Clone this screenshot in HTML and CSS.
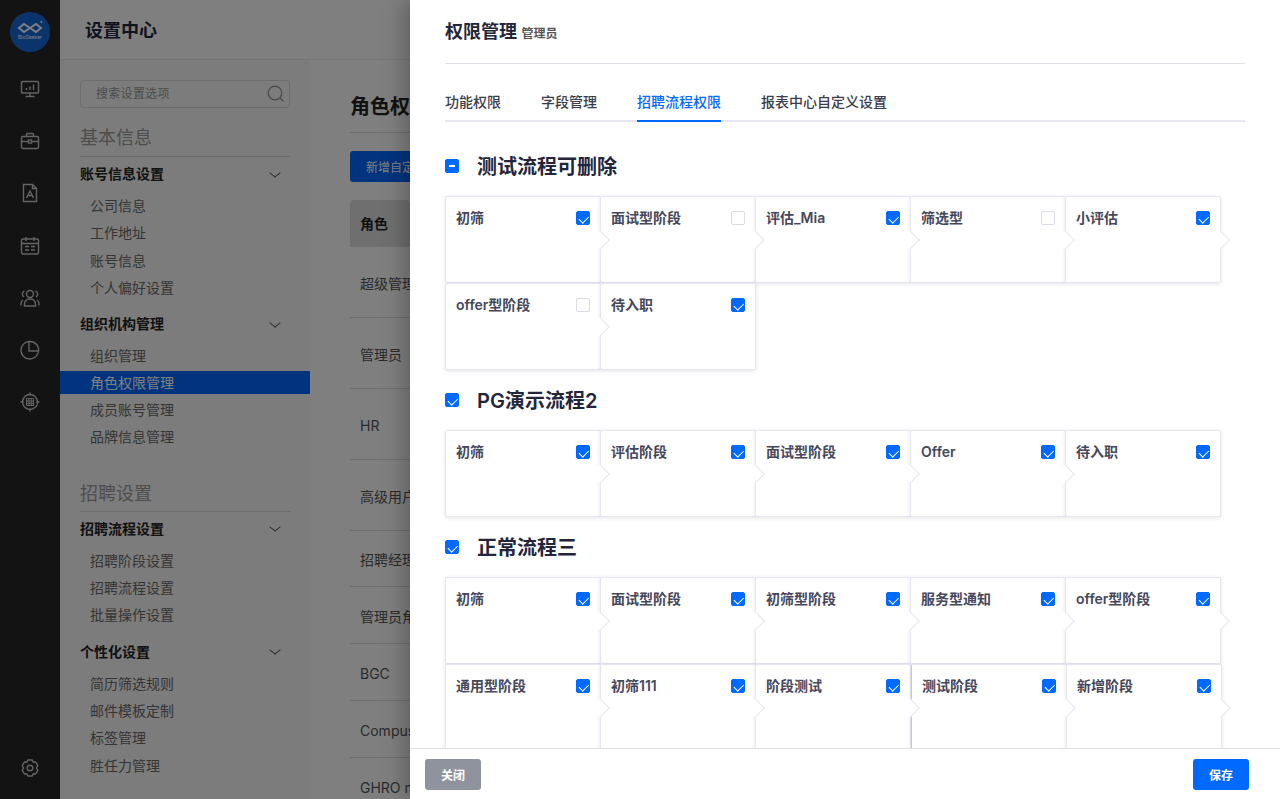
FILE: index.html
```html
<!DOCTYPE html>
<html lang="zh-CN">
<head>
    <meta charset="UTF-8">
    <title>设置中心</title>
    <link rel="stylesheet" href="styles.css">
</head>
<body>
    <div class="app">
        <nav class="rail">
            <div class="logo">
                <svg width="26" height="14" viewBox="0 0 26 14" fill="none" stroke="#fff" stroke-width="2">
                    <path d="M2 8 L7 4 L13 8 L7 12 Z"/>
                    <path d="M13 8 L19 4 L24 8 L19 12 Z"/>
                    <circle cx="24.500" cy="2" r="0.700" stroke-width="1"/>
                </svg>
                <span class="logo-text">BioSeeker</span>
            </div>
            <a class="rail-icon first">
                <svg width="20" height="20" viewBox="0 0 20 20" fill="none" stroke="currentColor" stroke-width="1.4">
                    <rect x="1.5" y="2.5" width="17" height="11.5" rx="1"/>
                    <path d="M10 14v3M5.5 17.5h9M6.5 11V9M10 11V7.5M13.5 11V5.5"/>
                </svg>
            </a>
            <a class="rail-icon">
                <svg width="20" height="20" viewBox="0 0 20 20" fill="none" stroke="currentColor" stroke-width="1.4">
                    <rect x="1.5" y="5.5" width="17" height="12" rx="1.5"/>
                    <path d="M6.5 5.5V3.5a1 1 0 0 1 1-1h5a1 1 0 0 1 1 1v2M1.5 10.5h7M11.5 10.5h7"/>
                    <rect x="8.5" y="9" width="3" height="3"/>
                </svg>
            </a>
            <a class="rail-icon">
                <svg width="20" height="20" viewBox="0 0 20 20" fill="none" stroke="currentColor" stroke-width="1.4">
                    <path d="M3.5 1.5h9l4 4v13h-13z"/>
                    <path d="M12.5 1.5v4h4M6.5 15l3.5-7 3.5 7M8 12.5h4"/>
                </svg>
            </a>
            <a class="rail-icon">
                <svg width="20" height="20" viewBox="0 0 20 20" fill="none" stroke="currentColor" stroke-width="1.4">
                    <rect x="1.5" y="3" width="17" height="15" rx="1.5"/>
                    <path d="M1.5 7.5h17M6 1v4M14 1v4M5 10.5h4M11 10.5h4M5 14h4M11 14h4"/>
                </svg>
            </a>
            <a class="rail-icon">
                <svg width="20" height="20" viewBox="0 0 20 20" fill="none" stroke="currentColor" stroke-width="1.4">
                    <circle cx="10" cy="6" r="3.5"/>
                    <path d="M4.5 18v-2a5 5 0 0 1 5-5h1a5 5 0 0 1 5 5v2zM4.500 2.800A3.500 3.500 0 0 0 4 9M15.500 2.800A3.500 3.500 0 0 1 16 9M1 17.500v-2a4 4 0 0 1 2-3.500M19 17.500v-2a4 4 0 0 0-2-3.500"/>
                </svg>
            </a>
            <a class="rail-icon">
                <svg width="20" height="20" viewBox="0 0 20 20" fill="none" stroke="currentColor" stroke-width="1.4">
                    <path d="M9 1.500v9.500h9.500A8.800 8.800 0 1 1 9 1.500z"/>
                    <path d="M9 1.500h1a8.500 8.500 0 0 1 8.500 9.500"/>
                </svg>
            </a>
            <a class="rail-icon">
                <svg width="20" height="20" viewBox="0 0 20 20" fill="none" stroke="currentColor" stroke-width="1.4">
                    <circle cx="10" cy="10" r="7.500"/>
                    <path d="M10 0.500v3M10 16.500v3M0.500 10h3M16.500 10h3"/>
                    <path d="M6.500 6.500h7v7h-7zM6.500 9h7M6.500 11.300h7M8.800 6.500v7M11.200 6.500v7" stroke-width="1"/>
                </svg>
            </a>
            <a class="rail-icon settings">
                <svg width="20" height="20" viewBox="0 0 20 20" fill="none" stroke="currentColor" stroke-width="1.4" stroke-linejoin="round">
                    <path d="M7.800 2h4.400l1 2.200 2.400-.2 2.200 3.600-1.400 2.400 1.400 2.400-2.200 3.600-2.400-.2-1 2.200H7.800l-1-2.200-2.400.2-2.200-3.600L3.600 10 2.200 7.600 4.400 4l2.400.2z"/>
                    <circle cx="10" cy="10" r="2.800"/>
                </svg>
            </a>
        </nav>

        <div class="page">
            <header class="page-header">设置中心</header>
            <div class="page-body">
                <aside class="side">
                    <div class="search">
                        <span class="search-text">搜索设置选项</span>
                        <svg width="18" height="18" viewBox="0 0 18 18" fill="none" stroke="#8f8f8f" stroke-width="1.2">
                            <circle cx="8" cy="8" r="6.8"/>
                            <path d="M13 13l3.500 3.500"/>
                        </svg>
                    </div>

                    <h3 class="side-title">基本信息</h3>
                    <div class="group-title">账号信息设置<i class="chev"></i></div>
                    <a class="side-item">公司信息</a>
                    <a class="side-item">工作地址</a>
                    <a class="side-item">账号信息</a>
                    <a class="side-item">个人偏好设置</a>

                    <div class="group-title next">组织机构管理<i class="chev"></i></div>
                    <a class="side-item">组织管理</a>
                    <a class="side-item active">角色权限管理</a>
                    <a class="side-item">成员账号管理</a>
                    <a class="side-item">品牌信息管理</a>

                    <h3 class="side-title second">招聘设置</h3>
                    <div class="group-title">招聘流程设置<i class="chev"></i></div>
                    <a class="side-item">招聘阶段设置</a>
                    <a class="side-item">招聘流程设置</a>
                    <a class="side-item">批量操作设置</a>

                    <div class="group-title next">个性化设置<i class="chev"></i></div>
                    <a class="side-item">简历筛选规则</a>
                    <a class="side-item">邮件模板定制</a>
                    <a class="side-item">标签管理</a>
                    <a class="side-item">胜任力管理</a>
                </aside>

                <main class="roles">
                    <h2 class="roles-title">角色权限管理</h2>
                    <button class="add-btn">新增自定义角色</button>
                    <div class="table-head">角色</div>
                    <div class="row">超级管理员</div>
                    <div class="row">管理员</div>
                    <div class="row">HR</div>
                    <div class="row">高级用户</div>
                    <div class="row short first-short">招聘经理</div>
                    <div class="row short">管理员角色</div>
                    <div class="row short">BGC</div>
                    <div class="row short">Compus</div>
                    <div class="row short">GHRO manager</div>
                </main>
            </div>
        </div>

        <div class="mask"></div>

        <section class="drawer">
            <div class="drawer-body">
                <div class="drawer-head">
                    <span class="drawer-title">权限管理</span>
                    <span class="drawer-sub">管理员</span>
                </div>
                <div class="tabs">
                    <a class="tab">功能权限</a>
                    <a class="tab">字段管理</a>
                    <a class="tab active">招聘流程权限</a>
                    <a class="tab">报表中心自定义设置</a>
                </div>

                <div class="flow-head">
                    <span class="check partial"></span>
                    <span class="flow-name">测试流程可删除</span>
                </div>
                <div class="stages">
                    <div class="stage">初筛<span class="check on"></span></div>
                    <div class="stage">面试型阶段<span class="check"></span></div>
                    <div class="stage">评估_Mia<span class="check on"></span></div>
                    <div class="stage">筛选型<span class="check"></span></div>
                    <div class="stage">小评估<span class="check on"></span></div>
                    <div class="stage">offer型阶段<span class="check"></span></div>
                    <div class="stage no-arrow">待入职<span class="check on"></span></div>
                </div>

                <div class="flow-head">
                    <span class="check on"></span>
                    <span class="flow-name">PG演示流程2</span>
                </div>
                <div class="stages">
                    <div class="stage">初筛<span class="check on"></span></div>
                    <div class="stage">评估阶段<span class="check on"></span></div>
                    <div class="stage">面试型阶段<span class="check on"></span></div>
                    <div class="stage">Offer<span class="check on"></span></div>
                    <div class="stage no-arrow">待入职<span class="check on"></span></div>
                </div>

                <div class="flow-head">
                    <span class="check on"></span>
                    <span class="flow-name">正常流程三</span>
                </div>
                <div class="stages">
                    <div class="stage">初筛<span class="check on"></span></div>
                    <div class="stage">面试型阶段<span class="check on"></span></div>
                    <div class="stage">初筛型阶段<span class="check on"></span></div>
                    <div class="stage">服务型通知<span class="check on"></span></div>
                    <div class="stage">offer型阶段<span class="check on"></span></div>
                    <div class="stage">通用型阶段<span class="check on"></span></div>
                    <div class="stage">初筛111<span class="check on"></span></div>
                    <div class="stage">阶段测试<span class="check on"></span></div>
                    <div class="stage shifted">测试阶段<span class="check on"></span></div>
                    <div class="stage">新增阶段<span class="check on"></span></div>
                </div>
            </div>
            <footer class="drawer-foot">
                <button class="foot-btn close">关闭</button>
                <button class="foot-btn save">保存</button>
            </footer>
        </section>
    </div>
</body>
</html>
```

FILE: styles.css
```css
* {
    margin: 0;
    padding: 0;
    box-sizing: border-box;
}

body {
    font-family: "Inter", "Noto Sans CJK SC", sans-serif;
    background: #fff;
    color: #23263b;
    overflow: hidden;
}

.app {
    display: flex;
    height: 799px;
    overflow: hidden;
    position: relative;
}

/* left icon rail */
.rail {
    width: 60px;
    flex: none;
    background: #262626;
    color: #c8c8c8;
    display: flex;
    flex-direction: column;
    align-items: center;
    padding-top: 12px;
}

.logo {
    width: 40px;
    height: 40px;
    border-radius: 50%;
    background: #1669d8;
    display: flex;
    flex-direction: column;
    align-items: center;
    padding-top: 8px;
}

.logo-text {
    color: #fff;
    font-size: 5px;
    line-height: 7px;
    white-space: nowrap;
}

.rail-icon {
    width: 20px;
    height: 20px;
    margin-bottom: 32.2px;
    display: block;
}

.rail-icon.first {
    margin-top: 27px;
}

.rail-icon.settings {
    margin-top: auto;
    margin-bottom: 21px;
}

/* settings page under the mask */
.page {
    flex: 1;
    display: flex;
    flex-direction: column;
    min-width: 0;
}

.page-header {
    height: 60px;
    flex: none;
    padding-left: 25px;
    font-size: 18px;
    font-weight: 600;
    line-height: 61px;
    border-bottom: 1px solid #e8e8e8;
}

.page-body {
    flex: 1;
    display: flex;
    min-height: 0;
}

.side {
    width: 250px;
    flex: none;
    background: #f8f8f8;
    padding-top: 20px;
}

.search {
    margin: 0 20px;
    height: 28px;
    border: 1px solid #d8d8d8;
    border-radius: 4px;
    display: flex;
    align-items: center;
    justify-content: space-between;
    padding: 0 4px 0 15px;
    font-size: 12px;
    color: #9a9a9a;
    letter-spacing: 0.3px;
}

.search-text {
    margin-top: -3px;
}

.side-title {
    margin: 14px 20px 0;
    height: 35px;
    border-bottom: 1px solid #d8d8d8;
    font-size: 18px;
    line-height: 32px;
    font-weight: 400;
    color: #9a9a9a;
}

.side-title.second {
    margin-top: 26px;
    line-height: 34px;
}

.group-title {
    margin: 6px 20px 7px;
    height: 22px;
    line-height: 22px;
    font-size: 14px;
    font-weight: 600;
    color: #222;
    display: flex;
    justify-content: space-between;
    align-items: center;
}

.group-title.next {
    margin-top: 12px;
}

.chev {
    width: 8px;
    height: 8px;
    border-right: 1px solid #444;
    border-bottom: 1px solid #444;
    transform: scaleY(0.8) rotate(45deg);
    margin: -3px 11px 0 0;
}

.side-item {
    display: block;
    height: 27.3px;
    line-height: 27px;
    padding-left: 30px;
    font-size: 14px;
    color: #6a6a6a;
}

.side-item.active {
    height: 23px;
    line-height: 23px;
    margin: 1.4px 0 2.3px;
    background: #0069ff;
    color: #fff;
}

.roles {
    width: 100px;
    flex: none;
    padding-left: 40px;
    white-space: nowrap;
    overflow: hidden;
}

.roles-title {
    height: 73px;
    padding-top: 29px;
    font-size: 20px;
    line-height: 36px;
    font-weight: 600;
    border-bottom: 1px solid #d8d8d8;
    color: #222;
    overflow: hidden;
}

.add-btn {
    display: block;
    margin-top: 18px;
    width: 120px;
    height: 31px;
    border: none;
    border-radius: 3px;
    background: #0069ff;
    color: #fff;
    font-family: inherit;
    font-size: 12px;
    text-align: left;
    padding-left: 16px;
    overflow: hidden;
}

.table-head {
    margin-top: 18px;
    height: 47px;
    background: #dedede;
    border-radius: 3px 3px 0 0;
    padding-left: 10px;
    line-height: 47px;
    font-size: 14px;
    font-weight: 600;
    color: #222;
}

.row {
    height: 71px;
    padding-left: 10px;
    font-size: 14px;
    line-height: 73px;
    color: #555;
    border-bottom: 1px solid #dcdcdc;
    overflow: hidden;
}

.row.short {
    height: 57px;
    line-height: 60px;
}

.row.first-short {
    height: 56px;
    line-height: 58px;
}

.mask {
    position: absolute;
    inset: 0;
    background: rgba(0, 0, 0, 0.5);
}

/* right drawer */
.drawer {
    position: absolute;
    top: 0;
    right: 0;
    bottom: 0;
    width: 870px;
    background: #fff;
    box-shadow: -6px 0 20px rgba(0, 0, 0, 0.25);
    display: flex;
    flex-direction: column;
}

.drawer-body {
    flex: 1;
    min-height: 0;
    overflow: hidden;
    padding: 0 35px;
}

.drawer-head {
    height: 64px;
    border-bottom: 1px solid #e0e0e6;
    padding-top: 19px;
    line-height: 26px;
}

.drawer-title {
    font-size: 18px;
    font-weight: 600;
    color: #23263b;
}

.drawer-sub {
    font-size: 12px;
    font-weight: 600;
    color: #555;
}

.tabs {
    display: flex;
    gap: 40px;
    height: 58px;
    border-bottom: 2px solid #e6e6f2;
    padding-top: 27px;
    margin-bottom: 14px;
}

.tab {
    font-size: 14px;
    font-weight: 500;
    line-height: 22px;
    height: 31px;
    color: #3a3c4c;
}

.tab.active {
    color: #0069ff;
    border-bottom: 2px solid #0069ff;
}

.flow-head {
    height: 60px;
    display: flex;
    align-items: center;
    gap: 18px;
}

.flow-name {
    font-size: 20px;
    font-weight: 600;
    color: #23263b;
    margin-top: -2px;
}

.stages {
    display: flex;
    flex-wrap: wrap;
}

.stage {
    width: 156px;
    height: 87px;
    margin-right: -1px;
    background: #fff;
    border: 1px solid #e6e6f2;
    border-radius: 2px;
    box-shadow: 0 1px 4px rgba(30, 30, 80, 0.12);
    padding: 11px 10px;
    display: flex;
    justify-content: space-between;
    align-items: flex-start;
    font-size: 14px;
    font-weight: 600;
    line-height: 20px;
    color: #45475a;
    position: relative;
}

/* little arrow pointing to the next stage */
.stage::after {
    content: "";
    position: absolute;
    right: -7px;
    top: 36px;
    width: 13px;
    height: 13px;
    background: #fff;
    border-top: 1px solid #e6e6f2;
    border-right: 1px solid #e6e6f2;
    transform: rotate(45deg);
    z-index: 1;
}

.stage.no-arrow::after {
    display: none;
}

.stage.shifted {
    margin-left: 1px;
    border-left-color: #c9c9d6;
}

.check {
    width: 14px;
    height: 14px;
    flex: none;
    margin-top: 3px;
    border: 1px solid #dcdce6;
    border-radius: 2px;
    background: #fff;
    position: relative;
}

.flow-head .check {
    margin-top: 0;
}

.check.on,
.check.partial {
    background: #0069ff;
    border-color: #0069ff;
}

.check.on::after {
    content: "";
    position: absolute;
    left: 3.5px;
    top: 1.5px;
    width: 5px;
    height: 7.5px;
    border-right: 1.2px solid #fff;
    border-bottom: 1.2px solid #fff;
    transform: rotate(45deg);
}

.check.partial::after {
    content: "";
    position: absolute;
    left: 3px;
    top: 5px;
    width: 6px;
    height: 1.5px;
    background: #fff;
}

.drawer-foot {
    height: 51px;
    flex: none;
    border-top: 1px solid #e0e0e6;
    display: flex;
    justify-content: space-between;
    padding: 10px 31px 0 15px;
    background: #fff;
    position: relative;
    z-index: 2;
}

.foot-btn {
    width: 56px;
    height: 31px;
    border: none;
    border-radius: 3px;
    color: #fff;
    font-family: inherit;
    font-size: 12px;
    font-weight: 600;
}

.foot-btn.close {
    background: #8f939d;
}

.foot-btn.save {
    background: #0069ff;
}
```
